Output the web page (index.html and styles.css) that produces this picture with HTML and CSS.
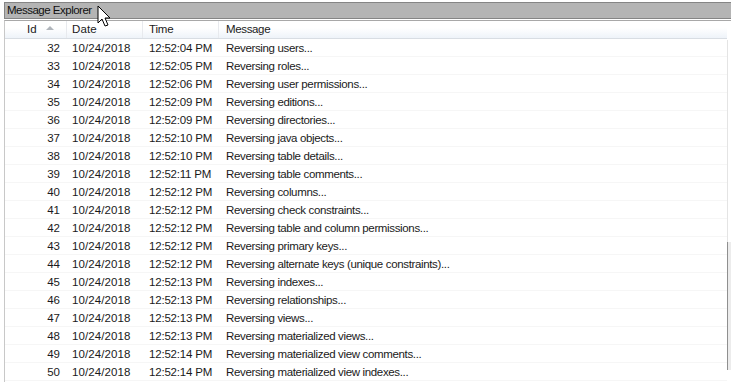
FILE: index.html
```html
<!DOCTYPE html>
<html lang="en">
<head>
    <meta charset="UTF-8">
    <title>Message Explorer</title>
    <link rel="stylesheet" href="styles.css">
</head>
<body>
    <div class="panel">
        <div class="title-bar">Message Explorer</div>
        <div class="list">
            <div class="grid">
                <div class="row head">
                    <div class="cell id">Id <span class="sort"></span></div>
                    <div class="cell date">Date</div>
                    <div class="cell time">Time</div>
                    <div class="cell msg">Message</div>
                </div>
                <div id="rows"></div>
            </div>
            <div class="scroll">
                <div class="thumb"></div>
            </div>
        </div>
    </div>

    <svg class="cursor" width="16" height="24" viewBox="0 0 16 24">
        <path d="M1 1 L1 18 L5 14 L8 21 L11 20 L8 13 L13 13 Z" fill="#fff" stroke="#000" stroke-width="1" stroke-linejoin="miter"/>
    </svg>

    <script>
        // rows of the message log
        var data = [
            [32, '12:52:04 PM', 'Reversing users...'],
            [33, '12:52:05 PM', 'Reversing roles...'],
            [34, '12:52:06 PM', 'Reversing user permissions...'],
            [35, '12:52:09 PM', 'Reversing editions...'],
            [36, '12:52:09 PM', 'Reversing directories...'],
            [37, '12:52:10 PM', 'Reversing java objects...'],
            [38, '12:52:10 PM', 'Reversing table details...'],
            [39, '12:52:11 PM', 'Reversing table comments...'],
            [40, '12:52:12 PM', 'Reversing columns...'],
            [41, '12:52:12 PM', 'Reversing check constraints...'],
            [42, '12:52:12 PM', 'Reversing table and column permissions...'],
            [43, '12:52:12 PM', 'Reversing primary keys...'],
            [44, '12:52:12 PM', 'Reversing alternate keys (unique constraints)...'],
            [45, '12:52:13 PM', 'Reversing indexes...'],
            [46, '12:52:13 PM', 'Reversing relationships...'],
            [47, '12:52:13 PM', 'Reversing views...'],
            [48, '12:52:13 PM', 'Reversing materialized views...'],
            [49, '12:52:14 PM', 'Reversing materialized view comments...'],
            [50, '12:52:14 PM', 'Reversing materialized view indexes...']
        ];
        var html = '';
        data.forEach(function (r) {
            html += '<div class="row">' +
                '<div class="cell id">' + r[0] + '</div>' +
                '<div class="cell date">10/24/2018</div>' +
                '<div class="cell time">' + r[1] + '</div>' +
                '<div class="cell msg">' + r[2] + '</div>' +
                '</div>';
        });
        document.getElementById('rows').innerHTML = html;
    </script>
</body>
</html>
```

FILE: styles.css
```css
* {
    margin: 0;
    padding: 0;
    box-sizing: border-box;
}
body {
    font-family: 'Liberation Sans', Arial, sans-serif;
    font-size: 11.5px;
    letter-spacing: -0.2px;
    color: #1a1a1a;
    background: #fff;
    overflow: hidden;
}
.panel {
    padding: 2px 0 0 4px;
    height: 382px;
    display: flex;
    flex-direction: column;
}
.title-bar {
    height: 17px;
    background: #b4b4b4;
    border: 1px solid #858585;
    border-right: none;
    padding-left: 2px;
    line-height: 15px;
    letter-spacing: -0.5px;
    color: #111;
}
.list {
    flex: 1;
    margin-top: 1px;
    border-top: 1px solid #a8a8a8;
    border-left: 1px solid #c8c8c8;
    display: flex;
    overflow: hidden;
}
.grid {
    flex: 1;
}
.row {
    display: flex;
    height: 18px;
    line-height: 18px;
    border-bottom: 1px solid #f6f6f6;
}
.row.head {
    background: linear-gradient(#fff 0%, #fff 40%, #eef3f9 100%);
    border-bottom: 1px solid #d8dde3;
    line-height: 17px;
}
.head .cell {
    border-right: 1px solid #e8eaee;
}
.cell {
    white-space: nowrap;
    overflow: hidden;
}
.id {
    width: 62px;
    text-align: right;
    padding-right: 7px;
    letter-spacing: 0;
}
.head .id {
    text-align: left;
    padding-left: 22px;
}
.sort {
    display: inline-block;
    width: 0;
    height: 0;
    margin-left: 6px;
    border-left: 4px solid transparent;
    border-right: 4px solid transparent;
    border-bottom: 4px solid #b0b5bb;
    vertical-align: 3px;
}
.date {
    width: 76px;
    padding-left: 5px;
    letter-spacing: 0.1px;
}
.time {
    width: 76px;
    padding-left: 6px;
}
.msg {
    flex: 1;
    padding-left: 7px;
    letter-spacing: -0.35px;
}
.head .msg {
    border-right: none;
}
.scroll {
    width: 4px;
    padding-top: 19px;
    display: flex;
    flex-direction: column;
}
.scroll::before {
    content: '';
    height: 202px;
    border-left: 1px solid #e4e4e4;
}
.thumb {
    height: 128px;
    border-left: 1px solid #8f8f8f;
    background: #ececec;
}
.cursor {
    position: absolute;
    left: 97px;
    top: 5px;
}
```
